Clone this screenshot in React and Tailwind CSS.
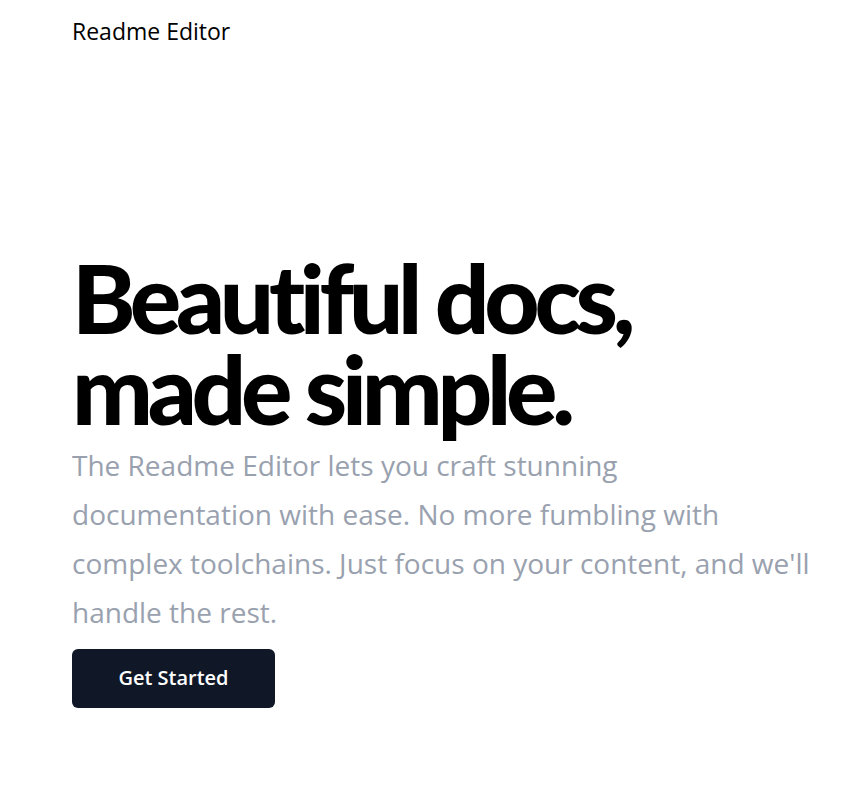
export default function App() {
  return (
    <div className="min-h-screen bg-white text-black" style={{ fontFamily: '"Open Sans", "Noto Sans", sans-serif' }}>
      {/* HEADER */}
      <header className="px-[72px] pt-[14px] pb-4">
        <span className="text-[23px] font-medium">Readme Editor</span>
      </header>

      {/* HERO */}
      <main className="pl-[72px] pr-4 pt-[186px]">
        <h1
          className="text-[96px] font-black leading-[91px] tracking-[-0.055em]"
          style={{ fontFamily: 'Lato, "Open Sans", sans-serif' }}
        >
          Beautiful docs,
          <br />
          made simple.
        </h1>
        <p className="mt-2 max-w-[744px] text-[28px] leading-[49px] text-gray-400">
          The Readme Editor lets you craft stunning documentation with ease. No more fumbling with complex toolchains.
          Just focus on your content, and we'll handle the rest.
        </p>
        <button className="mt-3 w-[203px] h-[59px] rounded-md bg-gray-900 text-xl font-semibold text-white">
          Get Started
        </button>
      </main>
    </div>
  );
}
